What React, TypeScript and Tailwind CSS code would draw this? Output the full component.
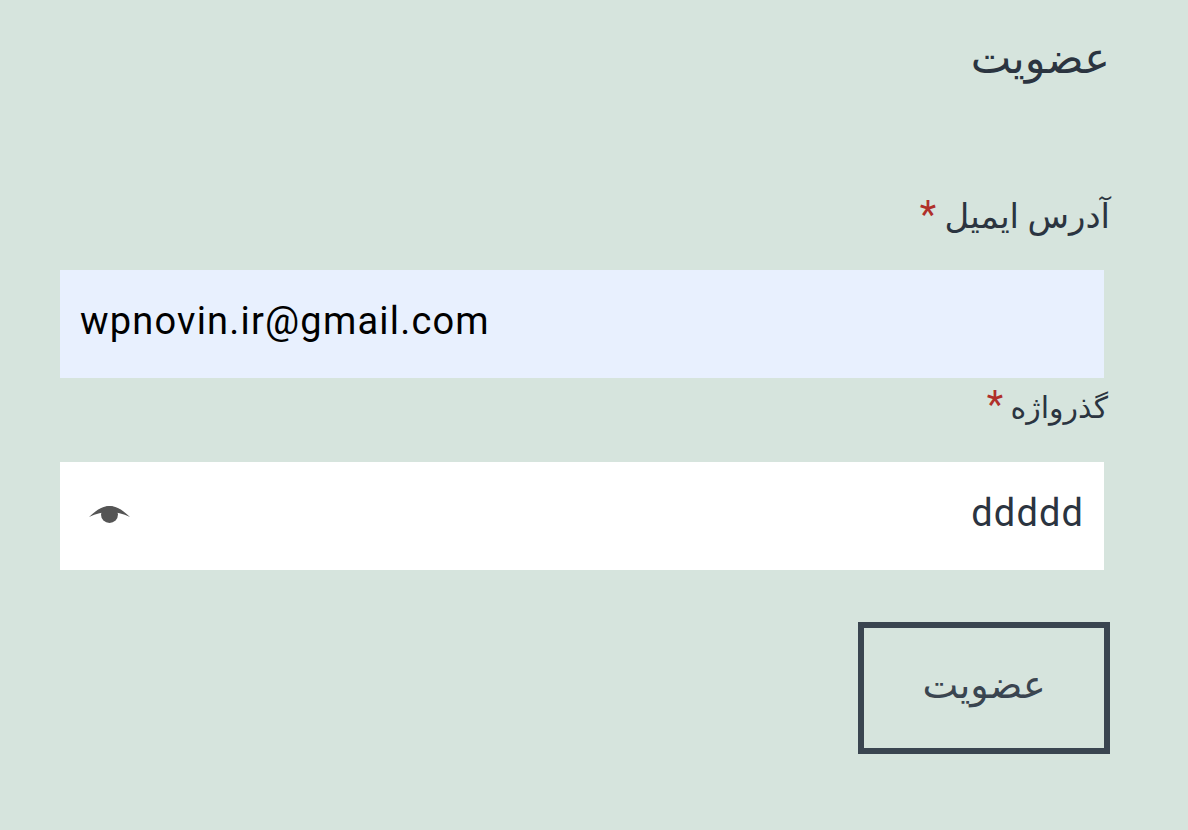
export default function App() {
  return (
    <div dir="rtl" className="min-h-[830px] bg-[#d6e4dd] px-[78px] pt-[30px] font-['Roboto','Noto_Sans','DejaVu_Sans',sans-serif] text-[#2b3440]">
      <h2 className="text-[43px] leading-[56px]">عضویت</h2>
      <form className="mt-[106px]">
        <label className="block text-[34px] leading-[48px]">
          آدرس ایمیل <span className="text-[38px] leading-none text-[#b0302a]">*</span>
        </label>
        <div className="-ml-[18px] mr-[6px] mt-[30px] h-[108px] bg-[#e8f0fe] flex items-center px-[20px] pb-[5px]">
          <input dir="ltr" readOnly value="wpnovin.ir@gmail.com" className="w-full text-[38px] tracking-[1.2px] text-black bg-transparent outline-none font-['Roboto',sans-serif]" />
        </div>
        <label className="block text-[30px] leading-[48px] mt-[6px] mr-[2px]">
          گذرواژه <span className="text-[38px] leading-none text-[#b0302a]">*</span>
        </label>
        <div className="-ml-[18px] mr-[6px] mt-[30px] h-[108px] bg-white flex items-center justify-between px-[20px] pb-[5px]">
          <span className="text-[38px] tracking-[1.1px]">ddddd</span>
          <svg width="44" height="24" viewBox="0 0 44 24" className="ml-[8px]">
            <path d="M1 15C8 8 15 4 21.5 4S35 8 42 15C35 11.5 28 10 21.5 10S8 11.5 1 15z" fill="#555" />
            <circle cx="21.5" cy="12.5" r="8.5" fill="#555" />
          </svg>
        </div>
        <button type="button" className="mt-[52px] w-[252px] h-[132px] border-[6px] border-[#3a4550] pb-[5px] text-[38px] text-[#3a4550]">عضویت</button>
      </form>
    </div>
  )
}
